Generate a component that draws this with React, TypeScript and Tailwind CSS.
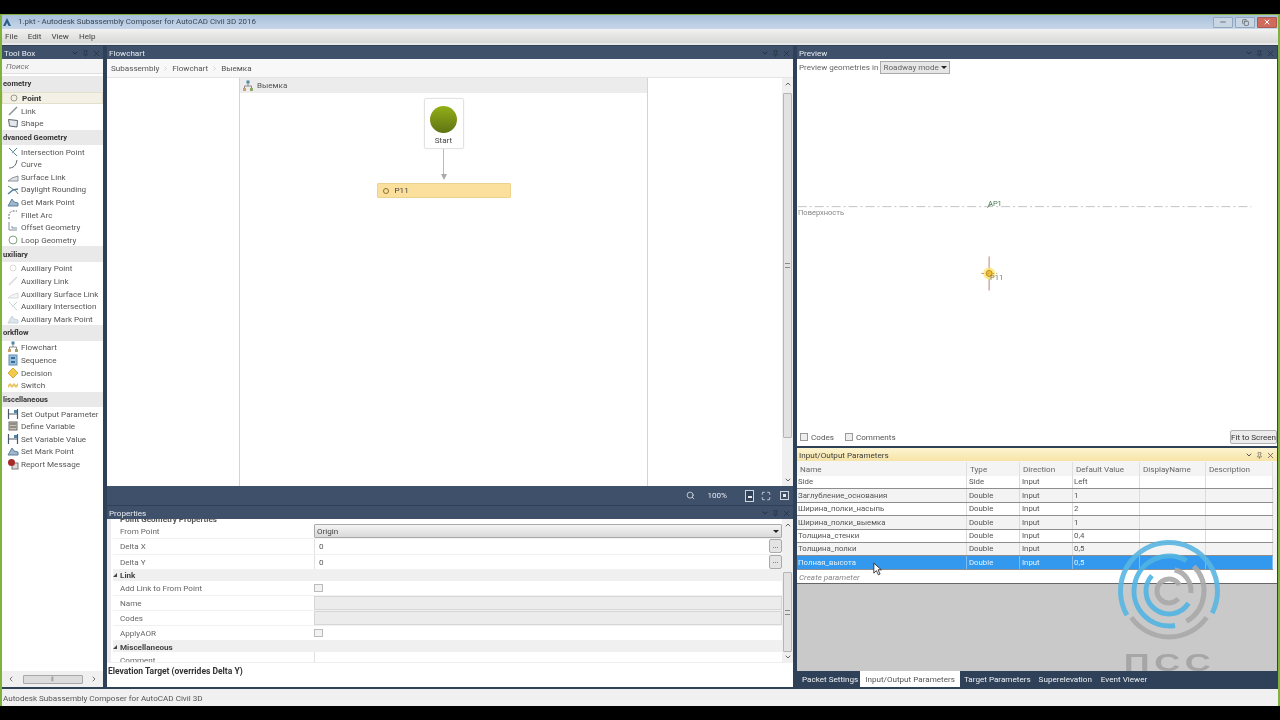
import { ChevronDown, ChevronRight, ChevronUp, ChevronLeft, Pin, Search, X, Maximize, Minus, Copy } from "lucide-react";

type Kind = "point" | "link" | "shape" | "cross" | "curve" | "surface" | "daylight" | "mark" | "fillet" | "offset" | "loop" | "flow" | "seq" | "decision" | "switch" | "param" | "define" | "report";

type Group = { name: string; items: { label: string; icon: Kind; faded?: boolean; active?: boolean }[] };

const toolbox: Group[] = [
  {
    name: "eometry",
    items: [
      { label: "Point", icon: "point", active: true },
      { label: "Link", icon: "link" },
      { label: "Shape", icon: "shape" },
    ],
  },
  {
    name: "dvanced Geometry",
    items: [
      { label: "Intersection Point", icon: "cross" },
      { label: "Curve", icon: "curve" },
      { label: "Surface Link", icon: "surface" },
      { label: "Daylight Rounding", icon: "daylight" },
      { label: "Get Mark Point", icon: "mark" },
      { label: "Fillet Arc", icon: "fillet" },
      { label: "Offset Geometry", icon: "offset" },
      { label: "Loop Geometry", icon: "loop" },
    ],
  },
  {
    name: "uxiliary",
    items: [
      { label: "Auxiliary Point", icon: "point", faded: true },
      { label: "Auxiliary Link", icon: "link", faded: true },
      { label: "Auxiliary Surface Link", icon: "surface", faded: true },
      { label: "Auxiliary Intersection", icon: "cross", faded: true },
      { label: "Auxiliary Mark Point", icon: "mark", faded: true },
    ],
  },
  {
    name: "orkflow",
    items: [
      { label: "Flowchart", icon: "flow" },
      { label: "Sequence", icon: "seq" },
      { label: "Decision", icon: "decision" },
      { label: "Switch", icon: "switch" },
    ],
  },
  {
    name: "liscellaneous",
    items: [
      { label: "Set Output Parameter", icon: "param" },
      { label: "Define Variable", icon: "define" },
      { label: "Set Variable Value", icon: "param" },
      { label: "Set Mark Point", icon: "mark" },
      { label: "Report Message", icon: "report" },
    ],
  },
];

const params = [
  ["Side", "Side", "Input", "Left"],
  ["Заглубление_основания", "Double", "Input", "1"],
  ["Ширина_полки_насыпь", "Double", "Input", "2"],
  ["Ширина_полки_выемка", "Double", "Input", "1"],
  ["Толщина_стенки", "Double", "Input", "0,4"],
  ["Толщина_полки", "Double", "Input", "0,5"],
  ["Полная_высота", "Double", "Input", "0,5"],
];

function ToolIcon({ kind }: { kind: Kind }) {
  const c = "#5d6670";
  return (
    <svg viewBox="0 0 12 12" className="h-[12px] w-[12px] shrink-0" fill="none" stroke={c} strokeWidth="1">
      {kind === "point" && <circle cx="6" cy="6" r="3" stroke="#9a9a8a" />}
      {kind === "link" && <path d="M2 10 L10 2" stroke="#8a8f95" strokeWidth="1.4" />}
      {kind === "shape" && <path d="M1.5 2.5 L10.5 3.5 L10 10 L2.5 9 Z" fill="#e4e8ec" />}
      {kind === "cross" && (
        <>
          <path d="M2 2 L10 10 M10 2 L5 7" stroke="#4f7f9c" />
          <circle cx="6" cy="6" r="1.2" fill="#8aa" stroke="none" />
        </>
      )}
      {kind === "curve" && <path d="M2 10 C6 10 9 8 10 2" />}
      {kind === "surface" && <path d="M1 10 L5 7 L11 5 L11 10 Z" fill="#dfe3e6" stroke="#8b949c" />}
      {kind === "daylight" && (
        <>
          <path d="M1 2 L9 7 L11 10" stroke="#5b8f6a" />
          <path d="M1 10 L6 6 L11 5" stroke="#5679a0" strokeWidth="1.4" />
        </>
      )}
      {kind === "mark" && <path d="M1 10 L5 3 L7 6 L11 7 L11 10 Z" fill="#9fb6cc" stroke="#5d7f9d" />}
      {kind === "fillet" && <path d="M2 10 L2 6 C2 4 4 2 6 2 L10 2" strokeDasharray="2 1.2" />}
      {kind === "offset" && <path d="M2 1 L2 9 L10 9 M5 5 L5 7 L10 7" stroke="#7d8f9c" />}
      {kind === "loop" && <circle cx="6" cy="6" r="4" stroke="#7da37d" />}
      {kind === "flow" && (
        <>
          <path d="M6 3 L6 6 M2.5 8 L2.5 6 L9.5 6 L9.5 8" stroke="#8b8b8b" />
          <rect x="4.5" y="0.5" width="3" height="3" fill="#4f86a8" stroke="none" />
          <rect x="1" y="8" width="3" height="3" fill="#c9a36a" stroke="none" />
          <rect x="8" y="8" width="3" height="3" fill="#93a76b" stroke="none" />
        </>
      )}
      {kind === "seq" && (
        <>
          <rect x="2" y="1" width="8" height="10" fill="#9fc0dc" stroke="#5f8fb5" />
          <rect x="4" y="3" width="4" height="2" fill="#2f6b9b" stroke="none" />
          <rect x="4" y="7" width="4" height="2" fill="#2f6b9b" stroke="none" />
        </>
      )}
      {kind === "decision" && <path d="M6 1 L11 6 L6 11 L1 6 Z" fill="#f2c94c" stroke="#d6ab38" />}
      {kind === "switch" && <path d="M1 6 L3 4 L5 6 L7 4 L9 6 L11 4 L11 7 L9 9 L7 7 L5 9 L3 7 L1 9 Z" fill="#e8c66a" stroke="none" />}
      {kind === "param" && (
        <>
          <path d="M1.5 1 L1.5 11 M10.5 1 L10.5 11 M1.5 6 L10.5 6" stroke="#4e5a66" strokeWidth="1.2" />
          <rect x="7" y="2" width="3" height="3" fill="#4f86a8" stroke="none" />
        </>
      )}
      {kind === "define" && (
        <>
          <rect x="2" y="2" width="8" height="8" fill="#c9c3b5" stroke="#6b6b6b" />
          <path d="M3 4 L9 4 M3 7 L9 7" stroke="#5a5a5a" />
        </>
      )}
      {kind === "report" && (
        <>
          <rect x="5" y="5" width="6" height="6" fill="#d9d9d9" stroke="#7a7a7a" />
          <circle cx="4.5" cy="4.5" r="3.5" fill="#a52a2a" stroke="none" />
        </>
      )}
    </svg>
  );
}

function PanelHeader({ title, light }: { title: string; light?: boolean }) {
  return (
    <div
      className={`flex h-[13px] shrink-0 items-center justify-between px-[2px] pt-[1px] text-[8.1px] ${
        light ? "bg-gradient-to-b from-[#fdf4d0] to-[#f6e3a6] text-[#3c3c3c]" : "bg-[#3f506a] text-[#e8edf2]"
      }`}
    >
      <span>{title}</span>
      <span className={`flex items-center gap-[3px] ${light ? "text-[#555]" : "text-[#22303f]"}`}>
        <ChevronDown size={8} strokeWidth={3} />
        <Pin size={7} />
        <X size={9} />
      </span>
    </div>
  );
}

function ToolBox() {
  return (
    <div className="flex w-[101px] shrink-0 flex-col">
      <PanelHeader title="Tool Box" />
      <div className="flex min-h-0 flex-1 flex-col bg-white">
        <div className="flex h-[15px] shrink-0 items-center border-b border-[#e0e0e0] bg-[#f5f5f5] pl-[4px] pt-[1px] text-[8.1px] italic text-[#777]">
          Поиск
        </div>
        <div className="min-h-0 flex-1 pt-[2px]">
          {toolbox.map((g) => (
            <div key={g.name}>
              <div className="flex h-[15.7px] items-center bg-[#e9e9e9] pl-[1px] text-[7.6px] font-bold text-[#333]">{g.name}</div>
              {g.items.map((it) => (
                <div
                  key={it.label}
                  className={`flex h-[12.65px] items-center gap-[2px] pl-[5px] text-[8.1px] ${it.active ? "border border-[#e4dfc8] bg-[#f3f1e6] font-bold text-[#333]" : "text-[#555]"}`}
                >
                  <span className={it.faded ? "opacity-35" : ""}>
                    <ToolIcon kind={it.icon} />
                  </span>
                  <span className="whitespace-nowrap">{it.label}</span>
                </div>
              ))}
            </div>
          ))}
        </div>
        <div className="flex h-[16px] shrink-0 items-center justify-between bg-[#f0f0f0] px-[5px] text-[#777]">
          <ChevronLeft size={8} strokeWidth={3} />
          <div className="flex h-[9px] w-[60px] items-center justify-center rounded-[1px] border border-[#a8a8a8] bg-[#dcdcdc] text-[6px] leading-none">⦀</div>
          <ChevronRight size={8} strokeWidth={3} />
        </div>
      </div>
    </div>
  );
}

function VScroll({ thumbClass }: { thumbClass: string }) {
  return (
    <div className="flex w-[11px] shrink-0 flex-col items-center justify-between bg-[#f0f0f0] py-[2px] text-[#666]">
      <ChevronUp size={8} strokeWidth={3} />
      <div className={`flex w-[9px] items-center justify-center rounded-[1px] border border-[#b5b5b5] bg-[#e2e2e2] ${thumbClass}`}>
        <div className="h-[5px] w-[5px] border-y border-[#888]" />
      </div>
      <ChevronDown size={8} strokeWidth={3} />
    </div>
  );
}

function Flowchart() {
  return (
    <div className="flex min-h-0 flex-1 flex-col">
      <PanelHeader title="Flowchart" />
      <div className="flex h-[19px] shrink-0 items-center gap-[3px] border-b border-[#e4e4e4] bg-[#f8f8f8] pl-[4px] pt-[1px] text-[8.1px] text-[#555]">
        <span>Subassembly</span>
        <ChevronRight size={7} className="text-[#bbb]" />
        <span>Flowchart</span>
        <ChevronRight size={7} className="text-[#bbb]" />
        <span>Выемка</span>
      </div>
      <div className="flex min-h-0 flex-1 bg-white">
        <div className="flex min-w-0 flex-1 pl-[132px]">
          <div className="flex w-[409px] flex-col border-x border-[#d4d4d4]">
            <div className="flex h-[15px] shrink-0 items-center gap-[3px] bg-[#ececec] pl-[2px] text-[8.1px] text-[#555]">
              <ToolIcon kind="flow" />
              <span>Выемка</span>
            </div>
            <div className="flex flex-col items-center pt-[5px]">
              <div className="flex h-[51px] w-[40px] flex-col items-center rounded-[2px] border border-[#e2e2e2] pt-[7px] shadow-[0_0_2px_#eee]">
                <div className="h-[27px] w-[27px] rounded-full bg-gradient-to-b from-[#93b016] to-[#5f7414]" />
                <span className="mt-[1px] text-[8.1px] text-[#444]">Start</span>
              </div>
              <div className="h-[25px] w-[1px] bg-[#bbb]" />
              <div className="h-0 w-0 border-x-[3px] border-t-[6px] border-x-transparent border-t-[#aaa]" />
              <div className="mt-[3px] flex h-[15px] w-[134px] items-center gap-[6px] rounded-[1px] border border-[#edd28e] bg-[#fbdf9c] pl-[5px] text-[8.1px] text-[#444]">
                <span className="h-[6px] w-[6px] rounded-full border border-[#8a7430]" />
                <span>P11</span>
              </div>
            </div>
          </div>
        </div>
        <VScroll thumbClass="h-[345px] mb-[34px]" />
      </div>
      <div className="flex h-[19px] shrink-0 items-center justify-end bg-[#3f506a] pr-[4px] text-[8.1px] text-[#e4e8ee]">
        <Search size={9} className="mr-[12px]" />
        <span className="mr-[18px]">100%</span>
        <span className="mr-[7px] flex h-[12px] w-[9px] items-end justify-center border border-[#d0d6de] bg-[#33435a]">
          <span className="mb-[3px] h-[2px] w-[4px] bg-[#e4e8ee]" />
        </span>
        <Maximize size={10} className="mr-[9px]" />
        <span className="flex h-[9px] w-[9px] items-center justify-center border border-[#d0d6de]">
          <span className="h-[3px] w-[3px] bg-[#e4e8ee]" />
        </span>
      </div>
    </div>
  );
}

function PropRow({ label, value, kind }: { label: string; value?: string; kind: "select" | "text" | "disabled" | "check" | "blank" }) {
  return (
    <div className={`flex border-b border-[#f1f1f1] ${kind === "check" ? "h-[15px]" : "h-[15.3px]"}`}>
      <div className="flex w-[201px] shrink-0 items-center pl-[7px] text-[8.1px] text-[#666]">{label}</div>
      {kind === "select" && (
        <div className="flex flex-1 items-center justify-between rounded-[1px] border border-[#aaa] bg-gradient-to-b from-[#f4f4f4] to-[#d9d9d9] px-[2px] text-[8.1px] text-[#444]">
          {value}
          <span className="h-0 w-0 border-x-[3px] border-t-[3px] border-x-transparent border-t-[#222]" />
        </div>
      )}
      {kind === "text" && (
        <div className="flex flex-1 items-center">
          <div className="flex h-full flex-1 items-center border-l border-[#e2e2e2] pl-[4px] text-[8.1px] text-[#555]">{value}</div>
          <div className="flex h-[14px] w-[13px] items-center justify-center rounded-[2px] border border-[#aaa] bg-[#e4e4e4] text-[7px] leading-none text-[#333]">...</div>
        </div>
      )}
      {kind === "disabled" && <div className="flex-1 border border-[#d6d6d6] bg-[#ececec]" />}
      {kind === "blank" && <div className="flex-1 border-l border-[#e2e2e2]" />}
      {kind === "check" && (
        <div className="flex flex-1 items-center">
          <div className="h-[8px] w-[9px] border border-[#bbb] bg-[#f2f2f2]" />
        </div>
      )}
    </div>
  );
}

function PropSection({ label }: { label: string }) {
  return (
    <div className="flex h-[11px] items-center bg-[#f0f0f0] text-[8.1px] font-bold text-[#444]">
      <span className="mr-[3px] h-0 w-0 border-b-[4px] border-l-[4px] border-b-[#444] border-l-transparent" />
      <span>{label}</span>
    </div>
  );
}

function Properties() {
  return (
    <div className="mt-[1px] flex h-[181px] shrink-0 flex-col">
      <PanelHeader title="Properties" />
      <div className="flex min-h-0 flex-1 bg-white">
        <div className="flex min-w-0 flex-1 flex-col">
          <div className="h-[144px] overflow-hidden border-b border-[#eee] bg-gradient-to-r from-[#ececec] from-[4px] to-white to-[4px] pl-[6px]">
            <div className="h-[5px] overflow-hidden">
              <span className="-mt-[5px] block whitespace-nowrap pl-[7px] text-[8.1px] font-bold leading-[10px] text-[#555]">Point Geometry Properties</span>
            </div>
            <PropRow label="From Point" value="Origin" kind="select" />
            <PropRow label="Delta X" value="0" kind="text" />
            <PropRow label="Delta Y" value="0" kind="text" />
            <PropSection label="Link" />
            <PropRow label="Add Link to From Point" kind="check" />
            <PropRow label="Name" kind="disabled" />
            <PropRow label="Codes" kind="disabled" />
            <PropRow label="ApplyAOR" kind="check" />
            <PropSection label="Miscellaneous" />
            <PropRow label="Comment" kind="blank" />
          </div>
          <div className="pl-[1px] pt-[2px] text-[8.5px] font-bold text-[#333]">Elevation Target (overrides Delta Y)</div>
        </div>
        <div className="flex h-[144px]">
          <VScroll thumbClass="h-[80px] mt-[42px]" />
        </div>
      </div>
    </div>
  );
}

function Preview() {
  return (
    <div className="flex min-h-0 flex-1 flex-col">
      <PanelHeader title="Preview" />
      <div className="flex min-h-0 flex-1 flex-col bg-white">
        <div className="flex h-[16px] shrink-0 items-center gap-[2px] pl-[2px] pt-[1px] text-[8.1px] text-[#666]">
          <span>Preview geometries in</span>
          <span className="flex h-[13px] w-[70px] items-center justify-between whitespace-nowrap border border-[#aaa] bg-[#e6e6e6] px-[2px]">
            Roadway mode
            <span className="h-0 w-0 border-x-[3px] border-t-[3px] border-x-transparent border-t-[#222]" />
          </span>
        </div>
        <div className="relative min-h-0 flex-1">
          <svg viewBox="0 0 480 352" className="absolute inset-0 h-full w-full" fill="none">
            <line x1="0" y1="132" x2="455" y2="132" stroke="#c4c4c4" strokeDasharray="9 3 2 3" />
            <path d="M190 133 L195 129" stroke="#7a8f7a" />
            <line x1="192" y1="182" x2="192" y2="216" stroke="#c8a8a0" strokeWidth="1.4" />
            <circle cx="192" cy="199" r="6" fill="#ffe36a" opacity="0.8" />
            <circle cx="192" cy="199" r="3" fill="#f3c22c" stroke="#b98a2a" />
            <line x1="184" y1="199" x2="200" y2="199" stroke="#c9a050" strokeDasharray="3 2" />
          </svg>
          <span className="absolute left-[191px] top-[123px] text-[7.5px] text-[#3e7a50]">AP1</span>
          <span className="absolute left-[1px] top-[132px] text-[7.5px] text-[#888]">Поверхность</span>
          <span className="absolute left-[193px] top-[197px] text-[7.5px] text-[#777]">P11</span>
        </div>
        <div className="flex h-[20px] shrink-0 items-center justify-between pl-[3px] pt-[2px] text-[8.1px] text-[#555]">
          <div className="flex items-center gap-[3px]">
            <span className="h-[8px] w-[8px] border border-[#999] bg-[#eee]" />
            <span className="mr-[8px]">Codes</span>
            <span className="h-[8px] w-[8px] border border-[#999] bg-[#eee]" />
            <span>Comments</span>
          </div>
          <span className="flex h-[14px] w-[47px] items-center justify-center whitespace-nowrap rounded-[2px] border border-[#b0b0b0] bg-[#ececec] text-[#333]">Fit to Screen</span>
        </div>
      </div>
    </div>
  );
}

const colClass = ["w-[170px]", "w-[53px]", "w-[53px]", "w-[67px]", "w-[66px]", "w-[67px]"];

function ParamsPanel() {
  return (
    <div className="mt-[2px] flex h-[239px] shrink-0 flex-col">
      <PanelHeader title="Input/Output Parameters" light />
      <div className="flex min-h-0 flex-1 flex-col bg-[#c9c9c9]">
        <div className="bg-[#f2f2f2]">
          <div className="flex h-[15px] bg-[#f4f4f4] pt-[1px] text-[8.1px] text-[#666]">
            {["Name", "Type", "Direction", "Default Value", "DisplayName", "Description"].map((h, i) => (
              <div key={h} className={`${colClass[i]} flex items-center border-r border-[#e0e0e0] pl-[3px]`}>
                {h}
              </div>
            ))}
          </div>
          {params.map((row, ri) => {
            const selected = ri === params.length - 1;
            return (
              <div
                key={row[0]}
                className={`mr-[4px] flex h-[13.4px] items-center border-b border-[#8d8d8d] text-[7.8px] ${
                  selected ? "bg-[#3399ee] text-[#e4f2fc]" : ri % 2 ? "bg-[#f3f3f3] text-[#555]" : "bg-white text-[#555]"
                }`}
              >
                {[0, 1, 2, 3, 4, 5].map((i) => (
                  <div key={i} className={`${colClass[i]} flex h-full items-center border-r ${selected ? "border-[#7dbcf0]" : "border-[#dcdcdc]"} ${i === 1 || i === 2 ? "pl-[2px]" : "pl-[1px]"}`}>
                    {row[i]}
                  </div>
                ))}
              </div>
            );
          })}
        </div>
        <div className="flex h-[14px] shrink-0 items-center border-b border-[#666] bg-white pl-[2px] pt-[1px] text-[8.1px] italic text-[#888]">Create parameter</div>
        <div className="min-h-0 flex-1" />
        <div className="-ml-[2px] flex h-[16px] shrink-0 items-center bg-[#2f4159] pl-[7px] text-[8.1px] text-[#eef2f6]">
          <span className="pt-[1px]">Packet Settings</span>
          <span className="ml-[2px] flex h-full items-center bg-white px-[5px] pt-[1px] text-[#555]">Input/Output Parameters</span>
          <span className="ml-[4px] pt-[1px]">Target Parameters</span>
          <span className="ml-[8px] pt-[1px]">Superelevation</span>
          <span className="ml-[9px] pt-[1px]">Event Viewer</span>
        </div>
      </div>
    </div>
  );
}

function arc(r: number, from: number, to: number) {
  const rad = (d: number) => (d * Math.PI) / 180;
  const x1 = r * Math.cos(rad(from));
  const y1 = r * Math.sin(rad(from));
  const x2 = r * Math.cos(rad(to));
  const y2 = r * Math.sin(rad(to));
  return `M ${x1} ${y1} A ${r} ${r} 0 ${to - from > 180 ? 1 : 0} 1 ${x2} ${y2}`;
}

// logo in the lower right corner, sits over the table
function Watermark() {
  return (
    <div className="pointer-events-none absolute left-[1112px] top-[534px] flex w-[114px] flex-col items-center">
      <svg viewBox="-57 -57 114 114" className="h-[114px] w-[114px] opacity-90" fill="none" strokeWidth="5">
        <path d={arc(48.5, 150, 387)} stroke="#5ab6e2" />
        <path d={arc(46, 35, 145)} stroke="#a9a9a9" />
        <path d={arc(35, 80, 300)} stroke="#52b4e2" />
        <path d={arc(35, 315, 420)} stroke="#a9a9a9" />
        <path d={arc(23, 32, 222)} stroke="#52b4e2" />
        <path d={arc(22, 285, 365)} stroke="#a9a9a9" />
        <path d={arc(12, 40, 330)} stroke="#a9a9a9" />
      </svg>
      <span className="mt-[7px] block scale-x-[1.5] text-[24px] font-bold leading-[16px] tracking-[3px] text-[#a6a6a6] [font-family:'Liberation_Sans',sans-serif]">ПСС</span>
    </div>
  );
}

export default function App() {
  return (
    <div className="relative flex h-[720px] w-[1280px] flex-col overflow-hidden bg-black py-[14px] blur-[0.35px] [font-family:'Roboto','Liberation_Sans',sans-serif]">
      <div className="flex min-h-0 flex-1 flex-col border-x-[2px] border-t border-[#7fb23a] bg-[#2f4159]">
        <div className="flex h-[14px] shrink-0 items-center justify-between bg-gradient-to-b from-[#a8c0dc] to-[#c6d6e8] pr-[1px] text-[7.9px] text-[#3c4856]">
          <div className="flex items-center gap-[7px] pl-[1px]">
            <svg viewBox="0 0 10 10" className="h-[8px] w-[8px]">
              <path d="M5 0 L10 10 L7 10 L5 6 L3 10 L0 10 Z" fill="#2c5c8c" />
            </svg>
            <span>1.pkt - Autodesk Subassembly Composer for AutoCAD Civil 3D 2016</span>
          </div>
          <div className="flex gap-[2px]">
            <span className="flex h-[11px] w-[20px] items-center justify-center rounded-[1px] border border-[#93a7bd] bg-[#c8d6e4] text-[#444]">
              <Minus size={8} />
            </span>
            <span className="flex h-[11px] w-[20px] items-center justify-center rounded-[1px] border border-[#93a7bd] bg-[#c8d6e4] text-[#444]">
              <Copy size={7} />
            </span>
            <span className="flex h-[11px] w-[20px] items-center justify-center rounded-[1px] border border-[#a85a50] bg-[#cf6a5c] text-white">
              <X size={8} strokeWidth={3} />
            </span>
          </div>
        </div>
        <div className="flex h-[16px] shrink-0 items-center gap-[10px] border-b-2 border-[#e8e8e8] bg-gradient-to-b from-[#f2f2f2] to-[#d8d8d6] pl-[3px] text-[8.1px] text-[#444]">
          <span>File</span>
          <span>Edit</span>
          <span>View</span>
          <span>Help</span>
        </div>
        <div className="flex min-h-0 flex-1 gap-[4px] pr-[1px] pt-[1px]">
          <ToolBox />
          <div className="flex w-[686px] shrink-0 flex-col">
            <Flowchart />
            <Properties />
          </div>
          <div className="flex min-w-0 flex-1 flex-col">
            <Preview />
            <ParamsPanel />
          </div>
        </div>
        <div className="flex h-[19px] shrink-0 items-center border-t-2 border-[#2f4159] bg-[#f0f0f0] pl-[1px] pt-[1px] text-[8.1px] text-[#555]">
          Autodesk Subassembly Composer for AutoCAD Civil 3D
        </div>
      </div>
      <Watermark />
      <svg viewBox="0 0 12 16" className="absolute left-[873px] top-[562px] h-[14px] w-[10px]">
        <path d="M1 1 L1 13 L4 10 L6.5 15 L8.5 14 L6 9 L10 9 Z" fill="#fff" stroke="#222" strokeWidth="1" />
      </svg>
    </div>
  );
}
